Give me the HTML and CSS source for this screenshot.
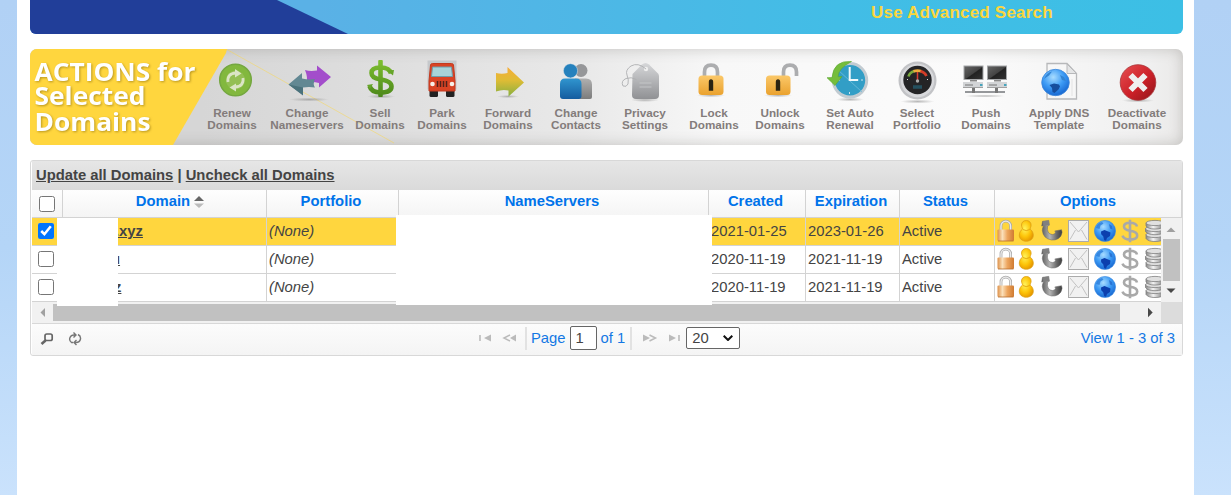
FILE: index.html
```html
<!DOCTYPE html>
<html lang="en">
<head>
<meta charset="utf-8">
<title>Domain Manager</title>
<link rel="stylesheet" href="styles.css">
</head>
<body>
<svg class="defs" width="0" height="0" aria-hidden="true">
  <defs>
    <linearGradient id="orange" x1="0" y1="0" x2="0" y2="1"><stop offset="0" stop-color="#fbc869"/><stop offset="1" stop-color="#eaa22f"/></linearGradient>
    <linearGradient id="steel" x1="0" y1="0" x2="0" y2="1"><stop offset="0" stop-color="#d6d7d9"/><stop offset="1" stop-color="#909194"/></linearGradient>
    <linearGradient id="green" gradientUnits="userSpaceOnUse" x1="0" y1="60" x2="0" y2="97"><stop offset="0" stop-color="#7fc030"/><stop offset="1" stop-color="#4c871a"/></linearGradient>
    <linearGradient id="fwd" x1="0" y1="0" x2="0" y2="1"><stop offset="0" stop-color="#f6ad38"/><stop offset=".45" stop-color="#dfbc35"/><stop offset="1" stop-color="#87b040"/></linearGradient>
    <linearGradient id="blue" x1="0" y1="0" x2="0" y2="1"><stop offset="0" stop-color="#3095cf"/><stop offset="1" stop-color="#145c9f"/></linearGradient>
    <linearGradient id="person" x1="0" y1="0" x2="0" y2="1"><stop offset="0" stop-color="#b0b0b0"/><stop offset="1" stop-color="#7c7c7c"/></linearGradient>
    <linearGradient id="red" x1="0" y1="0" x2="1" y2="1"><stop offset="0" stop-color="#e75052"/><stop offset=".55" stop-color="#cc2028"/><stop offset="1" stop-color="#8e1519"/></linearGradient>
    <linearGradient id="screen" x1="0" y1="0" x2="1" y2="1"><stop offset="0" stop-color="#666"/><stop offset=".5" stop-color="#444"/><stop offset=".55" stop-color="#222"/><stop offset="1" stop-color="#333"/></linearGradient>
    <linearGradient id="brass" x1="0" y1="0" x2="1" y2="0"><stop offset="0" stop-color="#dd9048"/><stop offset=".3" stop-color="#fbe0ba"/><stop offset=".6" stop-color="#eda55e"/><stop offset="1" stop-color="#cf7b32"/></linearGradient>
    <linearGradient id="phone" x1="0" y1="0" x2="1" y2="0"><stop offset="0" stop-color="#5b5b5b"/><stop offset=".4" stop-color="#b5b5b5"/><stop offset=".75" stop-color="#666"/><stop offset="1" stop-color="#3d3d3d"/></linearGradient>
    <linearGradient id="disk" x1="0" y1="0" x2="1" y2="0"><stop offset="0" stop-color="#888"/><stop offset=".4" stop-color="#f4f4f4"/><stop offset="1" stop-color="#777"/></linearGradient>
    <radialGradient id="globe" cx=".42" cy=".3" r=".75"><stop offset="0" stop-color="#a8dcff"/><stop offset=".5" stop-color="#3d9bf5"/><stop offset="1" stop-color="#1260cc"/></radialGradient>
    <radialGradient id="gold" cx=".4" cy=".4" r=".65"><stop offset="0" stop-color="#fff45c"/><stop offset=".6" stop-color="#fdc409"/><stop offset="1" stop-color="#e79800"/></radialGradient>
    <radialGradient id="shade"><stop offset="0" stop-color="#777" stop-opacity=".5"/><stop offset="1" stop-color="#777" stop-opacity="0"/></radialGradient>

    <symbol id="row-icons" viewBox="995 218 168 27">
      <path d="M1001 231v-5a4.800 4.800 0 0 1 9.600 0v5" fill="none" stroke="#aaa" stroke-width="2.800"/>
      <path d="M1001 231v-5a4.800 4.800 0 0 1 9.600 0v5" fill="none" stroke="#ececec" stroke-width="1.300"/>
      <rect x="997.500" y="229.500" width="16.500" height="11.500" rx="1" fill="url(#brass)"/>
      <path d="M998 241h15.500" stroke="#b56c2c" stroke-width=".8"/>
      <path d="M1026.300 220.500c-2.900 0-4.800 2-4.800 4.500 0 2 1 3 1 4-2 1.500-3.200 3.700-3.200 6.200 0 3.700 3 6 7 6s7-2.300 7-6c0-2.500-1.200-4.700-3.200-6.200 0-1 1-2 1-4 0-2.500-1.900-4.500-4.800-4.500z" fill="url(#gold)" stroke="#dca016" stroke-width=".8"/>
      <path d="M1022.800 229.500q3.500 2.200 7 0" fill="none" stroke="#dd9a08" stroke-width=".8"/>
      <path d="M1042.500 221.300l6.300-.9.600 4.800-1.800.8q-1.200 8 4.800 8.600 2.600 0 3.300-2.600l-1-1 6.800-1.300.6 2.500q-.5 4.500-4 6.500-3 1.700-6.500 1.300-8.600-1.500-9.300-9.500.1-3 1.500-4.700l-2.100.3z" fill="url(#phone)" stroke="#666" stroke-width=".5"/>
      <path d="M1043 221.300l5.800-.9.500 4.500-6 .9z" fill="#808080"/>
      <rect x="1068.500" y="220.500" width="20" height="21" fill="#f1f1f1" stroke="#ababab"/>
      <path d="M1070 222l8.500 10 8.500-10M1070 239.500l5.500-9.500M1087 239.500l-5.500-9.500" fill="none" stroke="#c2c2c2"/>
      <circle cx="1105" cy="231" r="10.600" fill="url(#globe)" stroke="#3a8ae0" stroke-width=".6"/>
      <path d="M1096 228q1-5 6-6l1.500 1.500-3 2-1 3.500z" fill="#2a7ddb" opacity=".8"/>
      <path d="M1101 231.500l3.500-1.500 6 2.500-.5 3.500-3 2-1 2.800-1.800-.8-1-3.800-2-2z" fill="#0b3fae"/>
      <path d="M1109 224l3 2 .5 3.500-2.500-1z" fill="#2a74d4"/>
      <path d="M1137 226.500q-1-3.700-7-3.700-6 0-6 3.800 0 3.200 6 4.200 7.200 1 7.200 4.800 0 4-7.200 4-6.200 0-7.500-3.900M1130 219.800v22.500" fill="none" stroke="#a9a9a9" stroke-width="2.600"/>
      <g stroke="#808080" stroke-width=".8" fill="url(#disk)">
        <path d="M1146 234.500v4q2 3 9 3t9-3v-4z"/><ellipse cx="1155" cy="234.800" rx="9" ry="2.800" fill="#ddd"/>
        <path d="M1145.500 228.500v3q2 3.200 9.500 3.200t9.500-3.200v-3z"/><ellipse cx="1155" cy="228.800" rx="9.500" ry="2.800" fill="#ddd"/>
        <path d="M1146 223v3q2 3 9 3t9-3v-3z"/><ellipse cx="1155" cy="223" rx="9" ry="2.600" fill="#e0e0e0"/>
      </g>
    </symbol>
  </defs>
</svg>

<main class="page">
  <section class="banner">
    <svg class="banner-art" viewBox="30 0 1153 34" aria-hidden="true"><path d="M30 0H277L348 34H30z" fill="#213e99"/></svg>
    <a class="advanced">Use Advanced Search</a>
  </section>

  <section class="actions">
    <svg class="actions-art" viewBox="30 49 1153 96">
      <path d="M226 49L394 143" stroke="#ffd63e" stroke-opacity=".45" stroke-width="1"/>
      <path d="M30 49H227L226 53 173 145H30z" fill="#ffd63e"/>
      <g class="headline">
        <text x="34.500" y="80.700" textLength="161" lengthAdjust="spacingAndGlyphs">ACTIONS for</text>
        <text x="34.500" y="105.200" textLength="111" lengthAdjust="spacingAndGlyphs">Selected</text>
        <text x="34.500" y="131.200" textLength="116" lengthAdjust="spacingAndGlyphs">Domains</text>
      </g>
    </svg>
    <div class="action-list">
      <a class="action"><svg viewBox="201 59 62 45">
        <circle cx="235.500" cy="80" r="15.800" fill="#82b83e" stroke="#74a740" stroke-width="1.500"/>
        <circle cx="235.500" cy="80" r="9.500" fill="#94bf54"/>
        <path d="M228 82q-1-8.500 8-9M243 78q1 8.500-8 9" fill="none" stroke="#dbe5c5" stroke-width="2.800"/>
        <path d="M235 69l6.500 4.500-6.500 4zM236 83.500l-6.500 4 6.500 4z" fill="#dbe5c5"/>
      </svg><span>Renew<br>Domains</span></a>
      <a class="action"><svg viewBox="263 59 88 45">
        <ellipse cx="309" cy="99.500" rx="20" ry="2" fill="url(#shade)"/>
        <path d="M305 70q5 1.500 12 .5V65.500l14 11.500-12 10.500v-4.500q-6-1.500-12.500-.5 1.500-5-1.500-12.500z" fill="#a34dcb"/>
        <path d="M288.500 84.500l13.500-11.500v5.500q7 1.500 13 .5-2.500 5 0 8.500-6-1-12 0v7.500z" fill="#628893"/>
        <path d="M288.500 84.500l14.500 3v8z" fill="#4a727c"/>
      </svg><span>Change<br>Nameservers</span></a>
      <a class="action"><svg viewBox="351 59 58 45">
        <ellipse cx="381" cy="96.500" rx="14" ry="2" fill="url(#shade)"/>
        <path d="M391 73.500q-1.500-6-10.500-6-9 0-9 5.500 0 5 9 6.500 11 1.500 11 7 0 6-11 6-9 0-11-6.500" fill="none" stroke="url(#green)" stroke-width="4.600"/>
        <rect x="378.200" y="60" width="4.600" height="37" rx="1" fill="url(#green)"/>
        <path d="M387 70.500l7-.5-1 5.500zM367 85l6-1-3 5z" fill="#66a529"/>
      </svg><span>Sell<br>Domains</span></a>
      <a class="action"><svg viewBox="409 59 66 45">
        <path d="M427.500 60.500h29v29h-29z" fill="#c5c8cb"/>
        <rect x="429.500" y="90" width="8.500" height="7" rx="1.500" fill="#222"/><rect x="446" y="90" width="8.500" height="7" rx="1.500" fill="#222"/>
        <path d="M429 81l1.500-16q.3-1.500 2-1.500h19q1.700 0 2 1.500L455 81v10h-26z" fill="#d94324" stroke="#c23a20"/>
        <path d="M432.500 67h19l1 9.500h-21z" fill="#a8d3d9" stroke="#6e9dab"/>
        <path d="M437.500 81v6M440.500 81v6M443.500 81v6M446.500 81v6" stroke="#51221b" stroke-width="1.500"/>
        <circle cx="432.500" cy="84" r="2.300" fill="#f7f0e9"/><circle cx="452" cy="84" r="2.300" fill="#f7f0e9"/>
      </svg><span>Park<br>Domains</span></a>
      <a class="action"><svg viewBox="475 59 66 45">
        <ellipse cx="508" cy="96.500" rx="11" ry="1.600" fill="url(#shade)"/>
        <path d="M496 73q6 1.500 11.500 0v-6l16.500 15.500-15.500 14v-6q-6-1.500-12.500 1z" fill="url(#fwd)"/>
      </svg><span>Forward<br>Domains</span></a>
      <a class="action"><svg viewBox="541 59 70 45">
        <circle cx="581" cy="70.500" r="6.500" fill="#969799"/>
        <path d="M575 78.500h11q6 0 6 6V97q0 2-2 2h-15z" fill="url(#person)"/>
        <circle cx="570.500" cy="70.800" r="7.100" fill="#2581bd" stroke="#dfe5e8" stroke-width=".5"/>
        <path d="M565 78.500h11q5.500 0 5.500 5.500v12q0 3-3 3h-15.500q-3 0-3-3V84q0-5.500 5-5.500z" fill="url(#blue)"/>
      </svg><span>Change<br>Contacts</span></a>
      <a class="action"><svg viewBox="611 59 68 45">
        <ellipse cx="645" cy="100" rx="14" ry="2" fill="url(#shade)"/>
        <path d="M632.500 74l9.500-9.500q3.500-3 7 0l9 9q1 1 1 3V95q0 4-4 4h-19q-4 0-4-4z" fill="url(#steel)"/>
        <path d="M639.500 83h12M639.500 87h12" stroke="#cacbcd" stroke-width=".8"/>
        <circle cx="646" cy="69" r="2.200" fill="#eee"/>
        <path d="M646 69q-8-7-15-3-6 4-4 9 2 5 1 9-1.500 3.500-5 2-2.500-5 3-7.500 5-2 10.500 1" fill="none" stroke="#aeafb1" stroke-width=".9"/>
      </svg><span>Privacy<br>Settings</span></a>
      <a class="action"><svg viewBox="679 59 70 45">
        <ellipse cx="711" cy="95.500" rx="14" ry="1.800" fill="url(#shade)"/>
        <path d="M704.500 78v-6q0-6.800 6.500-6.800t6.500 6.800v6" fill="none" stroke="#acadaf" stroke-width="3.700"/>
        <rect x="698.500" y="75.500" width="25" height="19.500" rx="3.500" fill="url(#orange)"/>
        <path d="M709.500 82q0-2 1.500-2t1.500 2v8h-3z" fill="#2c2412" stroke="#2c2412" stroke-width="1.400"/>
      </svg><span>Lock<br>Domains</span></a>
      <a class="action"><svg viewBox="749 59 62 45">
        <ellipse cx="778" cy="95.500" rx="14" ry="1.800" fill="url(#shade)"/>
        <path d="M783.500 78v-6q0-6.800 6.500-6.800t6.500 6.800v4" fill="none" stroke="#acadaf" stroke-width="3.700"/>
        <rect x="766" y="75.500" width="24.500" height="19.500" rx="3.500" fill="url(#orange)"/>
        <path d="M776.500 82q0-2 1.500-2t1.500 2v8h-3z" fill="#2c2412" stroke="#2c2412" stroke-width="1.400"/>
      </svg><span>Unlock<br>Domains</span></a>
      <a class="action"><svg viewBox="811 59 78 45">
        <ellipse cx="850" cy="99.500" rx="14" ry="2" fill="url(#shade)"/>
        <circle cx="850" cy="80.300" r="16.700" fill="#329ec6" stroke="#c2cbd1" stroke-width="3"/>
        <path d="M838 70l24 22" stroke="#71bddb" stroke-width=".8"/>
        <path d="M849.700 67v13h8.500" fill="none" stroke="#f2fafc" stroke-width="2"/>
        <path d="M849.500 92v2M863 80h-2M838 80h2" stroke="#cbe5ef"/>
        <path d="M851.500 61.500q-18-1.500-19.500 16l-5 .2 8 7.800 7-9-4 .2q.5-8.500 13.500-15.200z" fill="#75bd3b" stroke="#5ba830" stroke-width=".6"/>
      </svg><span>Set Auto<br>Renewal</span></a>
      <a class="action"><svg viewBox="889 59 56 45">
        <ellipse cx="917.500" cy="101.500" rx="17" ry="2" fill="url(#shade)"/>
        <circle cx="917.500" cy="80.500" r="19" fill="#c2c3c6"/><circle cx="917.500" cy="80.500" r="16.700" fill="#d8d9dc"/>
        <circle cx="917.500" cy="80" r="14.200" fill="#242426"/>
        <path d="M908.500 76.500q1-4 6-5.500" fill="none" stroke="#78a83d" stroke-width="2.600"/>
        <path d="M913.500 71.300q4-1.300 8 0" fill="none" stroke="#edac3b" stroke-width="2.600"/>
        <path d="M920.500 71q4.500 1.500 6 5" fill="none" stroke="#d23d28" stroke-width="2.600"/>
        <path d="M917.500 72v9" stroke="#d73c34" stroke-width="1.500"/><circle cx="917.500" cy="81" r="1.700" fill="#aaa"/>
        <path d="M913 87h9" stroke="#24505f" stroke-width="3.500"/>
        <path d="M907.500 79v1M927.500 79v1" stroke="#ddd"/>
      </svg><span>Select<br>Portfolio</span></a>
      <a class="action"><svg viewBox="945 59 82 45">
        <path d="M965 92h40" stroke="#95979a" stroke-width="1.800"/><path d="M973.500 88v5M996.500 88v5" stroke="#777" stroke-width="3"/>
        <ellipse cx="985" cy="96" rx="21" ry="1.500" fill="url(#shade)"/>
        <rect x="964" y="66" width="19" height="13.500" fill="url(#screen)" stroke="#a5a7a9"/>
        <rect x="987.500" y="66" width="19" height="13.500" fill="url(#screen)" stroke="#a5a7a9"/>
        <path d="M970 80.800h7M994 80.800h7" stroke="#888" stroke-width="1.600"/>
        <path d="M963 82h20v5.500h-20zM987 82h20v5.500h-20z" fill="#d3d5d7"/><path d="M963 87.500h20M987 87.500h20" stroke="#999" stroke-width=".9"/>
        <path d="M965 85h8M989 85h8" stroke="#777"/><path d="M980 85h2.500M1004 85h2.500" stroke="#46a4bd" stroke-width="1.800"/>
      </svg><span>Push<br>Domains</span></a>
      <a class="action"><svg viewBox="1027 59 64 45">
        <path d="M1047 63.500h20l9.500 10V99H1047z" fill="#f7f7f7" stroke="#b7b8ba" stroke-width="1.300"/>
        <path d="M1067 64v9.500h9.500z" fill="#e4e5e6" stroke="#b7b8ba"/>
        <path d="M1072 79v17" stroke="#e3e3e3"/>
        <ellipse cx="1055.500" cy="82.500" rx="13.800" ry="13.200" fill="url(#globe)" stroke="#3c87d9" stroke-width=".8"/>
        <path d="M1049.500 85l4.500-1.500 5 1 1 2-1.500 3-4 3.500-2-1-.5-4z" fill="#164e9e"/>
        <path d="M1044 79q3-7 8-7.500l-3 4-3 2zM1060 75l4 2 2 4-4-1z" fill="#3384d3"/>
      </svg><span>Apply DNS<br>Template</span></a>
      <a class="action"><svg viewBox="1091 59 92 45">
        <ellipse cx="1138" cy="100.500" rx="16" ry="2" fill="url(#shade)"/>
        <circle cx="1138" cy="82.500" r="17.800" fill="url(#red)" stroke="#a83437" stroke-width=".8"/>
        <path d="M1130.500 75l15 15M1145.500 75l-15 15" stroke="#efefef" stroke-width="6"/>
      </svg><span>Deactivate<br>Domains</span></a>
    </div>
  </section>

  <section class="grid">
    <div class="caption"><a>Update all Domains</a> | <a>Uncheck all Domains</a></div>
    <div class="row head">
      <div class="cell"><input type="checkbox" aria-label="Select all"></div>
      <div class="cell sorted">Domain <svg class="sort" viewBox="0 0 10 12"><path d="M0 5l5-5 5 5z" fill="#666"/><path d="M0 7.500h10l-5 4.500z" fill="#bbb"/></svg></div>
      <div class="cell">Portfolio</div><div class="cell">NameServers</div><div class="cell">Created</div><div class="cell">Expiration</div><div class="cell">Status</div><div class="cell">Options</div>
    </div>
    <div class="viewport">
      <div class="rows">
        <div class="row selected">
          <div class="cell check"><input type="checkbox" checked aria-label="Select"></div>
          <div class="cell name"><a>.xyz</a></div><div class="cell"><i>(None)</i></div><div class="cell"></div><div class="cell">2021-01-25</div><div class="cell">2023-01-26</div><div class="cell">Active</div>
          <div class="cell opts"><svg><use href="#row-icons"/></svg></div>
        </div>
        <div class="row">
          <div class="cell check"><input type="checkbox" aria-label="Select"></div>
          <div class="cell name second"><a>u</a></div><div class="cell"><i>(None)</i></div><div class="cell"></div><div class="cell">2020-11-19</div><div class="cell">2021-11-19</div><div class="cell">Active</div>
          <div class="cell opts"><svg><use href="#row-icons"/></svg></div>
        </div>
        <div class="row">
          <div class="cell check"><input type="checkbox" aria-label="Select"></div>
          <div class="cell name third"><a>z</a></div><div class="cell"><i>(None)</i></div><div class="cell"></div><div class="cell">2020-11-19</div><div class="cell">2021-11-19</div><div class="cell">Active</div>
          <div class="cell opts"><svg><use href="#row-icons"/></svg></div>
        </div>
      </div>
      <div class="vscroll">
        <svg viewBox="0 0 20 21"><path d="M5.500 14h9L10 9.500z" fill="#a0a0a0"/></svg>
        <div class="vthumb"></div>
        <svg viewBox="0 0 20 21"><path d="M5.500 7.500h9L10 12z" fill="#484848"/></svg>
      </div>
    </div>
    <div class="hscroll">
      <svg viewBox="0 0 21 21"><path d="M13 6v9l-4.500-4.500z" fill="#a0a0a0"/></svg>
      <div class="hthumb"></div>
      <svg class="right" viewBox="0 0 41 21"><path d="M28 5.800v9.400l4.700-4.700z" fill="#484848"/></svg>
      <div class="corner"></div>
    </div>
    <div class="pager">
      <div class="tools">
        <svg viewBox="0 0 14 14"><rect x="5" y="2" width="7.200" height="6.500" rx="1.800" fill="none" stroke="#666" stroke-width="1.700"/><path d="M5.500 8.500L1.500 12" fill="none" stroke="#666" stroke-width="2.600"/></svg>
        <svg viewBox="0 0 14 14"><path d="M5 10.500H3.500Q.8 8.500 2 5.500q1-2.500 4-2.500h2M5.500.500L8 3 5.500 5.500M10 2.500q3 1.500 2.500 4.500-.7 3.500-4.500 3.500H6M8.500 8L6 10.500 8.500 13" fill="none" stroke="#777" stroke-width="1.400"/></svg>
      </div>
      <div class="pages">
        <svg class="nav" viewBox="0 0 38 10"><path d="M1 2v6" stroke="#bbb" stroke-width="1.600"/><path d="M12 1.500v7L5 5zM37 1.500v7L31 5z" fill="#bbb"/><path d="M31 2l-6 3 6 3" fill="none" stroke="#bbb" stroke-width="1.500"/></svg>
        <i class="sep"></i><span>Page</span><input class="num" value="1" aria-label="Page"><span>of 1</span><i class="sep after"></i>
        <svg class="nav" viewBox="0 0 38 10"><path d="M1 1.500v7L8 5zM27 1.500v7L34 5z" fill="#bbb"/><path d="M7.500 2l6 3-6 3" fill="none" stroke="#bbb" stroke-width="1.500"/><path d="M37 2v6" stroke="#bbb" stroke-width="1.600"/></svg>
        <div class="select">20<svg viewBox="0 0 10 6"><path d="M.7.700L5 5 9.300.700" fill="none" stroke="#111" stroke-width="2"/></svg></div>
      </div>
      <span class="view">View 1 - 3 of 3</span>
    </div>
    <div class="mask mask-name"></div>
    <div class="mask mask-ns"></div>
  </section>
</main>
</body>
</html>
```

FILE: styles.css
```css
* { box-sizing: border-box; }
body {
  margin: 0;
  height: 495px;
  overflow: hidden;
  font: 14.800px/18px "Liberation Sans", Arial, sans-serif;
  color: #444;
  background: linear-gradient(#b1d1f5, #b4d5f7 50%, #cae2fc);
}
.defs { position: absolute; }
svg { display: block; }
.page {
  width: 1177px;
  height: 495px;
  margin-left: 17px;
  padding: 0 11px 0 13px;
  background: #fff;
}
.banner {
  position: relative;
  height: 34px;
  padding-left: 841px;
  border-radius: 0 0 6px 6px;
  overflow: hidden;
  background: linear-gradient(90deg, #5ab1e6 25%, #42bde6 70%, #3cbfe5);
}
.banner-art { position: absolute; left: 0; top: 0; width: 1153px; height: 34px; }
.advanced {
  display: block;
  padding-top: 4px;
  font-size: 17px;
  font-weight: bold;
  letter-spacing: 0.2px;
  color: #fbd63d;
}
.actions {
  position: relative;
  height: 96px;
  margin-top: 15px;
  padding-left: 171px;
  border-radius: 7px;
  overflow: hidden;
  background: linear-gradient(90deg, #d6d6d6 15%, #dfdfdf 32%, #e9e9e9 48%, #f8f8f8 60%, #fbfbfb 82%, #f0f0f0 97%, #eae9e8);
  box-shadow: inset 0 0 14px rgba(110, 105, 100, 0.32);
}
.actions-art { position: absolute; left: 0; top: 0; width: 1153px; height: 96px; }
.headline {
  font: bold 25px "Open Sans", sans-serif;
  fill: #fff;
  filter: drop-shadow(1px 1.500px 1px rgba(130, 100, 10, 0.55));
}
.action-list {
  position: relative;
  display: grid;
  grid-template-columns: 62px 88px 58px 66px 66px 70px 68px 70px 62px 78px 56px 82px 64px 92px;
  padding-top: 10px;
}
.action svg { width: 100%; height: 45px; }
.action span {
  display: block;
  margin-top: 3px;
  font-size: 11.700px;
  font-weight: bold;
  line-height: 12.400px;
  text-align: center;
  white-space: nowrap;
  color: #837c7b;
}
.grid {
  position: relative;
  height: 196px;
  margin-top: 15px;
  padding: 0 0 0 1px;
  border: 1px solid #d8d8d8;
  border-radius: 3px;
  background: #fff;
}
.caption {
  height: 29px;
  padding: 5px 4px 0;
  font-weight: bold;
  background: linear-gradient(#e6e6e6, #dadada);
}
a { text-decoration: none; }
.caption a, .name a { text-decoration: underline; }
.row {
  display: grid;
  grid-template-columns: 31px 204px 132px 310px 97px 94px 95px 1fr;
  height: 28px;
}
.cell {
  padding: 0 2px;
  line-height: 26px;
  white-space: nowrap;
  border-right: 1px solid #d3d3d3;
  border-bottom: 1px solid #d3d3d3;
}
.head { background: linear-gradient(#fefefe, #f4f4f4); font-weight: bold; color: #0073ea; }
.head .cell { line-height: 22px; text-align: center; }
.head .cell:nth-child(n+3) { padding: 0 3px 0 0; }
.head .cell:last-child { padding: 0; }
.head .sorted { padding-left: 13px; }
.sort { display: inline-block; width: 10px; height: 12px; vertical-align: -2px; }
input[type="checkbox"] { display: block; width: 16px; height: 16px; margin: 6px 0 0 5px; }
.check input[type="checkbox"] { margin: 5px 0 0 4px; }
.selected { background: #ffd63e; }
.viewport { display: flex; height: 84px; }
.rows { width: 1129px; flex: none; overflow: hidden; }
.name { padding-left: 52px; font-weight: bold; }
.name.second { padding-left: 48px; }
.name.third { padding-left: 51px; }
.opts { padding: 0; border-right: 0; overflow: hidden; }
.opts svg { width: 168px; height: 27px; }
.vscroll { width: 21px; background: #f1f1f1; }
.vscroll svg { width: 20px; height: 21px; }
.vthumb { width: 17px; height: 42px; margin-left: 2px; background: #c1c1c1; }
.hscroll { display: flex; height: 21px; background: #f1f1f1; }
.hscroll svg { width: 21px; height: 21px; flex: none; }
.hscroll .right { width: 41px; }
.hthumb { width: 1067px; height: 17px; margin-top: 2px; background: #c1c1c1; }
.corner { flex: 1; background: #dcdcdc; }
.pager {
  display: grid;
  grid-template-columns: 447px 1fr 120px;
  height: 32px;
  padding-right: 7px;
  border-top: 1px solid #d8d8d8;
  background: linear-gradient(#fcfcfc, #f4f4f4);
  color: #1478e4;
}
.tools { display: flex; gap: 14px; padding: 8px 0 0 8px; }
.tools svg { width: 14px; height: 14px; }
.pages { display: flex; align-items: center; height: 28px; }
.nav { width: 38px; height: 10px; flex: none; }
.sep { width: 2px; height: 23px; margin: 0 4px 0 8px; background: #e2e2e2; }
.sep.after { margin: 0 10px 0 5px; }
.num {
  width: 27px;
  height: 24px;
  margin: 0 4px;
  padding: 0 5px;
  border: 1px solid #666;
  border-radius: 2px;
  font: inherit;
  color: #444;
  background: #fff;
}
.select {
  display: flex;
  align-items: center;
  justify-content: space-between;
  width: 54px;
  height: 22px;
  margin-left: 6px;
  padding: 0 6px 0 5px;
  border: 1px solid #666;
  border-radius: 2px;
  color: #444;
  background: #fff;
}
.select svg { width: 10px; height: 6px; }
.view { padding-top: 5px; text-align: right; white-space: nowrap; }
.mask { position: absolute; background: #fff; }
.mask-name { left: 26px; top: 57px; width: 61px; height: 88px; }
.mask-ns { left: 365px; top: 54px; width: 316px; height: 90px; }
```
